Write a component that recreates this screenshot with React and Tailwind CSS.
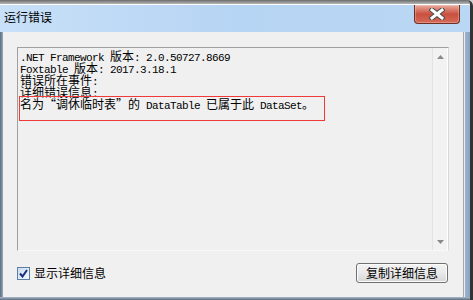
import React from "react";

const lines = [
  ".NET Framework 版本: 2.0.50727.8669",
  "Foxtable 版本: 2017.3.18.1",
  "错误所在事件:",
  "详细错误信息:",
  "名为“调休临时表”的 DataTable 已属于此 DataSet。",
];

function Mixed({ text }) {
  const parts = text.match(/[\x00-\x7f]+|[^\x00-\x7f]+/g) || [];
  return parts.map((p, i) =>
    /^[\x00-\x7f]/.test(p) ? (
      <span
        key={i}
        className="inline-block h-[12px] leading-[12px] font-['Liberation_Mono',monospace] text-[11px] tracking-[-0.6px]"
      >
        {p}
      </span>
    ) : (
      <span
        key={i}
        className="inline-block h-[12px] leading-[12px] font-['Noto_Sans_CJK_SC',sans-serif] text-[12px]"
      >
        {p}
      </span>
    )
  );
}

function CloseButton() {
  return (
    <div className="w-[46px] h-[19px] mr-[10px] rounded-b-[4px] border border-t-0 border-[#6e2f27] bg-gradient-to-b from-[#e8ab9e] via-[#c9503f] to-[#d56a58] flex items-center justify-center shadow-[inset_0_0_0_1px_rgba(255,255,255,0.25)]">
      <svg width="16" height="12" viewBox="0 0 16 12">
        <path d="M3 2 L13 10 M13 2 L3 10" stroke="#4a4a4a" strokeWidth="5" strokeLinecap="square" />
        <path d="M3 2 L13 10 M13 2 L3 10" stroke="#ffffff" strokeWidth="3" strokeLinecap="square" />
      </svg>
    </div>
  );
}

function Arrow({ up }) {
  return (
    <div className="h-[17px] flex items-center justify-center">
      <svg width="7" height="4" viewBox="0 0 7 4">
        {up ? (
          <path d="M3.5 0 L7 4 L0 4 Z" fill="#8a8a8a" />
        ) : (
          <path d="M0 0 L7 0 L3.5 4 Z" fill="#8a8a8a" />
        )}
      </svg>
    </div>
  );
}

export default function App() {
  return (
    <div className="w-[473px] h-[300px] bg-[#cfcfcf] overflow-hidden">
      <div className="h-full flex flex-col rounded-tr-[6px] border-r-[3px] border-[#343434] bg-[#8fa8c4] overflow-hidden">
        <div className="h-[4px] bg-gradient-to-b from-[#6c6c6c] to-[#b8b8b8]" />

        <div className="h-[28px] flex items-start justify-between border-t border-white bg-gradient-to-r from-[#c8e0f8] via-[#b6d4f3] to-[#bad7f4]">
          <div className="pl-[4px] pt-[5px] font-['Noto_Sans_CJK_SC',sans-serif] text-[12px] leading-[14px] text-black">
            运行错误
          </div>
          <CloseButton />
        </div>

        <div className="flex-1 flex">
          <div className="w-[3px] bg-gradient-to-r from-[#5f6b78] to-[#93abc7]" />

          <div className="w-[460px] bg-[#f0f0f0] pt-[15px] pl-[14px]">
            <div className="relative w-[432px] h-[204px] flex border border-t-[#a0a0a0] border-l-[#a0a0a0] border-r-[#d9d9d9] border-b-[#f8f8f8]">
              <div className="flex-1 pl-[2px] pt-[1px] text-black">
                {lines.map((l, i) => (
                  <div key={i} className="h-[12px] leading-[12px] whitespace-pre">
                    <Mixed text={l} />
                  </div>
                ))}
              </div>
              <div className="w-[16px] flex flex-col justify-between border-l border-[#e3e3e3] border-r border-r-white bg-[#f2f2f2]">
                <Arrow up />
                <Arrow />
              </div>
              <div className="absolute left-[1px] top-[48px] w-[306px] h-[25px] border-[1.5px] border-[#f03a3a]" />
            </div>

            <div className="mt-[12px] w-[432px] pr-[1px] h-[20px] flex items-center justify-between">
              <div className="flex items-center gap-[4px]">
                <div className="w-[13px] h-[13px] border border-[#5b80a8] bg-gradient-to-br from-[#c9dcef] to-[#f4f8fc] flex items-center justify-center">
                  <svg width="9" height="9" viewBox="0 0 9 9">
                    <path d="M1 4.5 L3.5 7.5 L8 1" stroke="#1d2c7c" strokeWidth="2" fill="none" />
                  </svg>
                </div>
                <span className="font-['Noto_Sans_CJK_SC',sans-serif] text-[12px] leading-[14px] text-black">
                  显示详细信息
                </span>
              </div>
              <button className="w-[92px] h-[20px] rounded-[3px] border border-[#707070] bg-gradient-to-b from-[#f3f3f3] via-[#e9e9e9] to-[#d6d6d6] shadow-[inset_0_0_0_1px_#fcfcfc] font-['Noto_Sans_CJK_SC',sans-serif] text-[12px] leading-[14px] text-black">
                复制详细信息
              </button>
            </div>
          </div>

          <div className="flex-1 flex">
            <div className="w-[1px] bg-[#a8a8a8]" />
            <div className="w-[1px] bg-[#e9eef4]" />
            <div className="flex-1 bg-gradient-to-r from-[#9db3cc] to-[#8aa3bf]" />
          </div>
        </div>

        <div className="h-[3px] bg-gradient-to-b from-[#a9bcd2] to-[#5f6b78]" />
      </div>
    </div>
  );
}
